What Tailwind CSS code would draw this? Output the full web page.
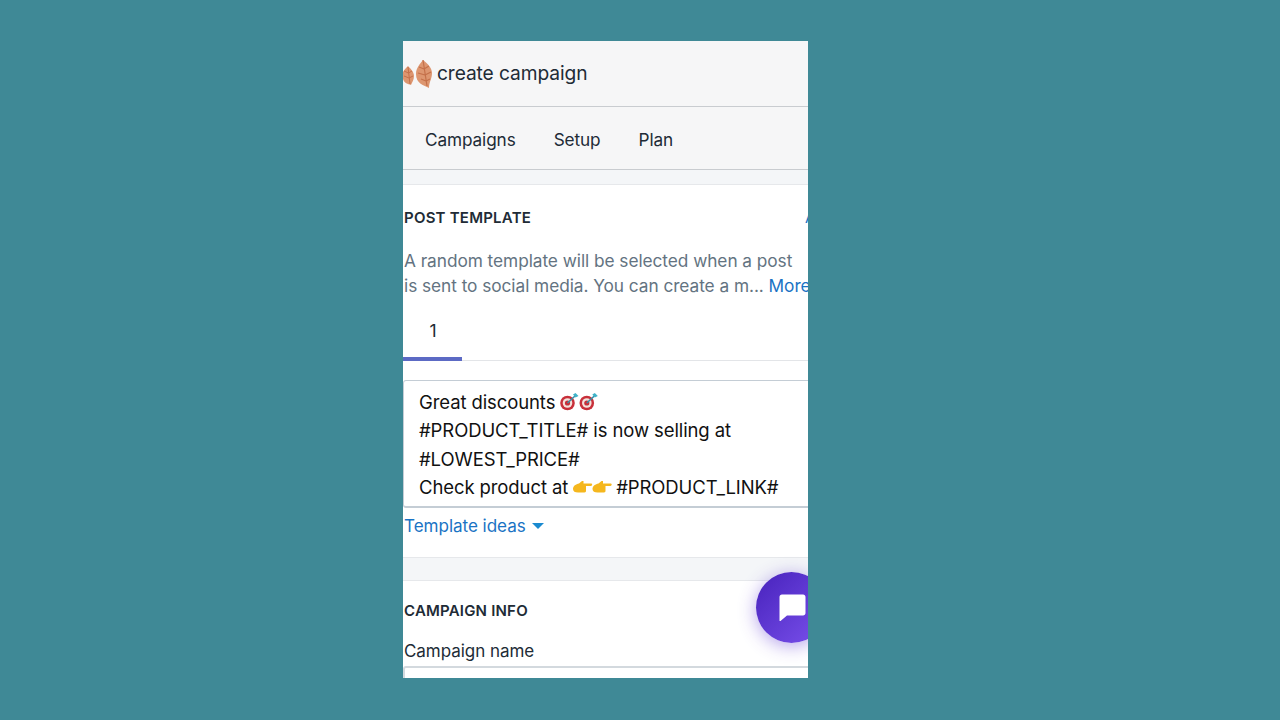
<!doctype html>
<html><head><meta charset="utf-8"><script src="https://cdn.jsdelivr.net/npm/@tailwindcss/browser@4"></script></head>
<body class="m-0 h-[720px] w-[1280px] overflow-hidden bg-[#3f8996] font-['Inter',sans-serif] antialiased">
<div class="flex h-full pl-[403px] pt-[41px]">
<div class="relative flex h-[637px] w-[405px] flex-col overflow-hidden bg-[#f4f6f8]">
  <header class="flex h-[66px] shrink-0 items-center border-b border-[#c9ccd0] bg-[#f6f6f7]">
    <svg class="h-[30px] w-[30px] shrink-0" viewBox="0 0 30 30">
      <path d="M5 7C8 10 11 13 11 17C11 21 9 23 8 26C5 25 1 24 0 20V13C1 11 3 9 5 7Z" fill="#dd9670"/>
      <path d="M5 8L7 25M5.500 14L9 12M5.500 14L1 12M6 19L10 17M6 19L1 17" stroke="#c4704a" stroke-width="1" fill="none"/>
      <path d="M20 1C25 5 29 9 29 14C29 20 26 23 26 29C21 26 13 25 13 15C13 9 17 5 20 1Z" fill="#dd9670"/>
      <path d="M20 1L24 27M21 10L26 7M21 10L16 8M22 16L28 13M22 16L15 14M23 22L27 20M23 22L18 20" stroke="#c4704a" stroke-width="1.200" fill="none"/>
    </svg>
    <span class="ml-[4px] text-[19.2px] leading-none tracking-[-0.1px] text-[#212b36]">create campaign</span>
  </header>
  <nav class="flex h-[63px] shrink-0 items-center gap-[38px] border-b border-[#c9ccd0] bg-[#f6f6f7] pl-[22px] pt-[4px] text-[17.2px] tracking-[-0.1px] text-[#212b36]">
    <span>Campaigns</span><span>Setup</span><span>Plan</span>
  </nav>
  <div class="h-[14px] shrink-0"></div>
  <section class="h-[374px] shrink-0 border-y border-[#e6e8eb] bg-white">
    <div class="relative ml-px mt-[24px] text-[15px] font-semibold leading-[18px] tracking-[0.22px] text-[#212b36]">POST TEMPLATE<span class="absolute left-[401px] top-0 font-normal text-[#1a73c4]">A</span></div>
    <p class="ml-px mt-[22px] w-[420px] text-[17.28px] leading-[24.5px] tracking-[-0.05px] text-[#637381]">A random template will be selected when a post<br>is sent to social media. You can create a m... <span class="text-[#1a73c4]">More</span></p>
    <div class="mt-[16px] flex h-[47px] border-b border-[#e3e5e8]">
      <div class="flex h-[47px] w-[59px] shrink-0 items-start justify-center border-b-[4px] border-[#5c6ac4] pl-px pt-[5px] text-[17.5px] leading-[24px] text-[#212b36]">1</div>
    </div>
    <div class="mt-[19px] h-[128px] w-[420px] rounded-[3px] border border-b-2 border-[#c4cdd5] bg-white pl-[15px] pt-[7px] text-[18.5px] leading-[28.3px] tracking-[-0.1px] text-[#111]">
      <div class="flex items-center">Great discounts
        <svg class="ml-[4px] h-[18px] w-[39px]" viewBox="0 0 39 18">
          <circle cx="8.500" cy="10" r="7.300" fill="#c8303a"/><circle cx="8.500" cy="10" r="4.800" fill="#f3e2dc"/><circle cx="8.500" cy="10" r="2.600" fill="#c8303a"/><path d="M8.500 10L16 3" stroke="#3b8ea5" stroke-width="1.600"/><path d="M14 1.500L16.500 4.500L19.500 3L16.500 0Z" fill="#3fb3c9"/>
          <g transform="translate(19.300)"><circle cx="8.500" cy="10" r="7.300" fill="#c8303a"/><circle cx="8.500" cy="10" r="4.800" fill="#f3e2dc"/><circle cx="8.500" cy="10" r="2.600" fill="#c8303a"/><path d="M8.500 10L16 3" stroke="#3b8ea5" stroke-width="1.600"/><path d="M14 1.500L16.500 4.500L19.500 3L16.500 0Z" fill="#3fb3c9"/></g>
        </svg>
      </div>
      <div>#PRODUCT_TITLE# is now selling at</div>
      <div>#LOWEST_PRICE#</div>
      <div class="flex items-center">Check product at
        <svg class="ml-[5px] mr-[4px] h-[14px] w-[39px]" viewBox="0 0 39 14">
          <path d="M0 9C0 6 3 4 6 3.500L9 1L10.500 1L10.500 3.500L18.500 3.500C19.500 3.500 19.500 6 18 6L13 6V11C13 12 12 12.500 10 12.500L5 12.500C2 12.500 0 11.500 0 9Z" fill="#f5b71e"/>
          <path transform="translate(19.500)" d="M0 9C0 6 3 4 6 3.500L9 1L10.500 1L10.500 3.500L18.500 3.500C19.500 3.500 19.500 6 18 6L13 6V11C13 12 12 12.500 10 12.500L5 12.500C2 12.500 0 11.500 0 9Z" fill="#f5b71e"/>
        </svg>#PRODUCT_LINK#
      </div>
    </div>
    <div class="ml-px mt-[6px] flex items-center text-[17.1px] leading-[24px] tracking-[-0.05px] text-[#1a73c4]">Template ideas
      <svg class="ml-[6px] h-[6px] w-[12px]" viewBox="0 0 12 6"><path d="M0 0H12L6 6Z" fill="#1a8ad0"/></svg>
    </div>
  </section>
  <div class="h-[22px] shrink-0"></div>
  <section class="flex-1 border-t border-[#e6e8eb] bg-white">
    <div class="ml-px mt-[21px] text-[15px] font-semibold leading-[18px] tracking-[0.2px] text-[#212b36]">CAMPAIGN INFO</div>
    <div class="ml-px mt-[19px] text-[17px] leading-[24px] tracking-[-0.05px] text-[#212b36]">Campaign name</div>
    <div class="mt-[3px] h-[20px] w-[420px] rounded-[3px] border-2 border-b border-[#d3d9de] bg-white"></div>
  </section>
  <div class="absolute left-[353px] top-[531px] flex h-[71px] w-[71px] items-center justify-center rounded-full bg-linear-to-br from-[#4820bc] to-[#7b50ec] pl-[2px] shadow-[0_3px_18px_rgba(90,50,210,0.45)]">
    <svg class="h-[28px] w-[27px]" viewBox="0 0 27 28"><path d="M3 0.500H24C25.500 0.500 26.500 1.500 26.500 3V19C26.500 20.500 25.500 21.500 24 21.500H8L1.500 27C1 27.300 0.500 27 0.500 26.500V3C0.500 1.500 1.500 0.500 3 0.500Z" fill="#fff"/></svg>
  </div>
</div>
</div>
</body></html>
